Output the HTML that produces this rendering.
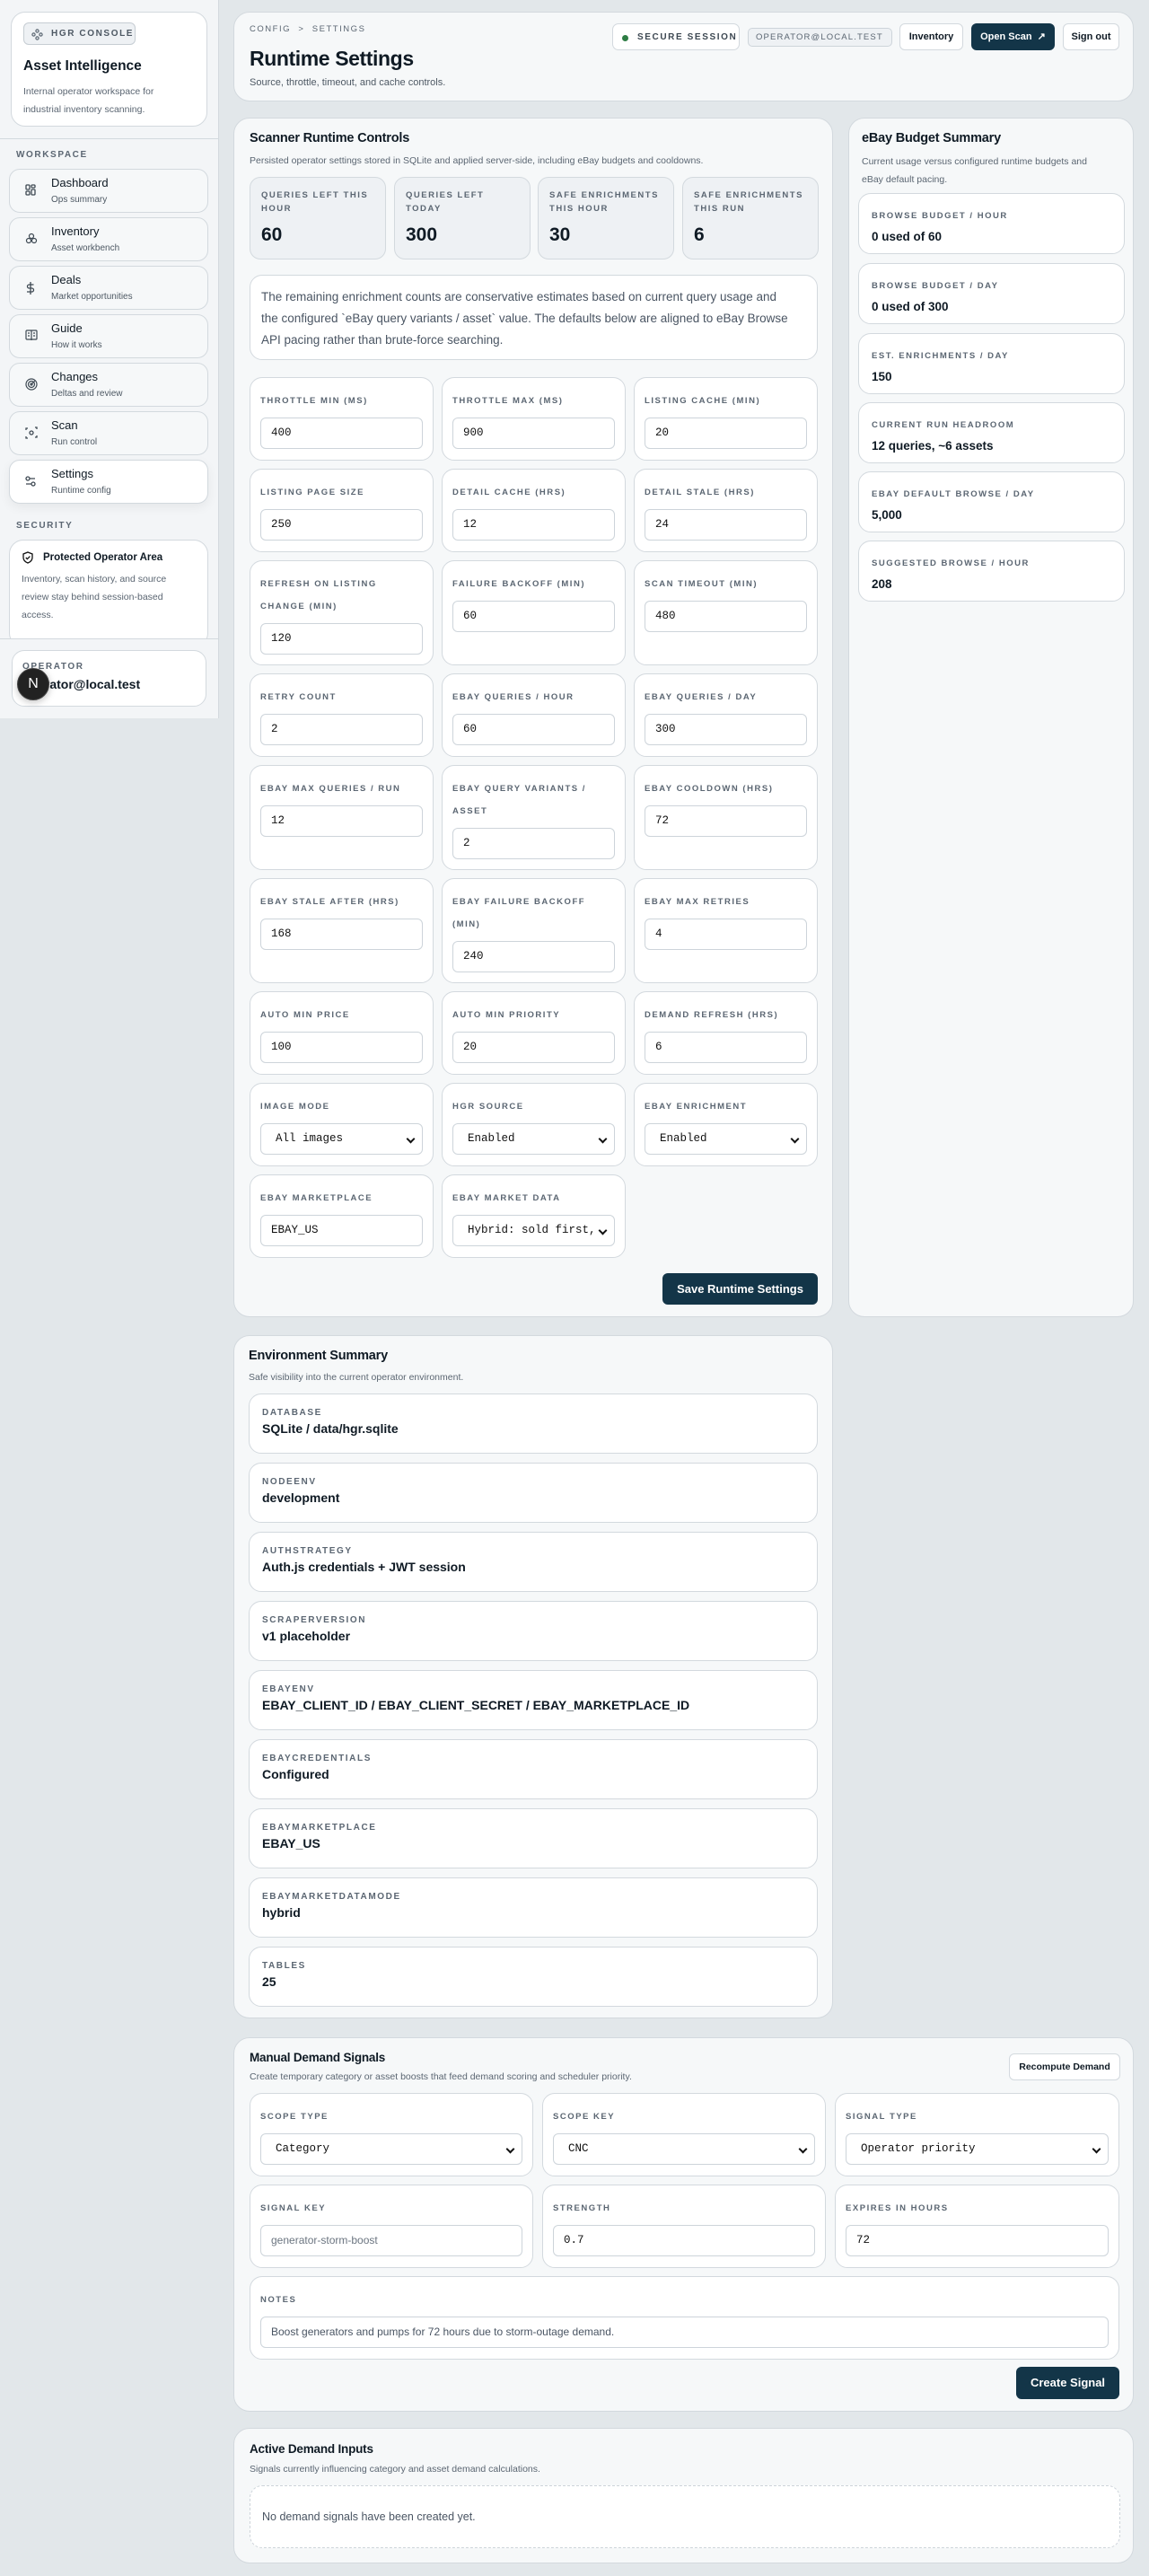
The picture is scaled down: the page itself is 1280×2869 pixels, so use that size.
<!DOCTYPE html>
<html><head><meta charset="utf-8"><style>
*{box-sizing:border-box;margin:0;padding:0}
body{width:1280px;height:2869px;background:#e2e7ea;font-family:"Liberation Sans",sans-serif;color:#0f1a24;position:relative;overflow:hidden}
.abs{position:absolute}
.side{left:0;top:0;width:244px;height:800px;background:#f3f5f7;border-right:1px solid #d3d9de}
.cap{font-size:10px;font-weight:bold;letter-spacing:.16em;color:#5b6672;text-transform:uppercase}
.card{background:#f6f8f9;border:1px solid #d3d9de;border-radius:18px}
.box{background:#fff;border:1px solid #d3d9de;border-radius:14px}
.nav{position:absolute;left:10px;width:222px;height:49px;border:1px solid #d3d9de;border-radius:12px;background:#f6f8f9}
.nav.act{background:#fff;box-shadow:0 4px 12px rgba(0,0,0,.06)}
.nav svg{position:absolute;left:17px;top:16px}
.nav .t{position:absolute;left:46px;top:7px;font-size:13px;color:#0f1a24}
.nav .s{position:absolute;left:46px;top:28px;font-size:10px;color:#4d5863}
.h2{font-size:14.5px;font-weight:bold;letter-spacing:-.2px}
.desc{font-size:10.5px;color:#5b6672}
.grid{display:grid;grid-template-columns:205px 205px 205px;column-gap:9px;row-gap:9px}
.f{background:#fff;border:1px solid #d3d9de;border-radius:14px;padding:13px 11px 0}
.f .cap{line-height:25px;font-size:9.5px}
.inp{margin-top:6px;height:35px;border:1px solid #cdd4da;border-radius:6px;background:#fff;font-family:"Liberation Mono",monospace;font-size:12.5px;padding:0 11px;line-height:33px;color:#111;position:relative;white-space:nowrap;overflow:hidden}
.sel::after{content:"";position:absolute;right:9px;top:13px;width:5px;height:5px;border-right:2px solid #111;border-bottom:2px solid #111;transform:rotate(45deg)}
.sel{padding-left:16px}
.btn{position:absolute;border-radius:6px;font-size:11px;font-weight:bold;text-align:center}
.dark{background:#133548;color:#fff}
.envi{position:absolute;left:16px;width:634px;height:67px}
.envi .cap{position:absolute;left:14px;top:15px}
.envi .v{position:absolute;left:14px;top:30px;font-size:14px;font-weight:bold}
.bud{position:absolute;left:10px;width:297px;height:68px}
.bud .cap{position:absolute;left:14px;top:19px;font-size:9.5px}
.bud .v{position:absolute;left:14px;top:40px;font-size:13.5px;font-weight:bold}
.stat{position:absolute;top:65px;height:92px;width:152px;background:#eef1f4;border:1px solid #d3d9de;border-radius:12px}
.stat .cap{position:absolute;left:12px;top:12px;line-height:15px;font-size:9.5px}
.stat .n{position:absolute;left:12px;top:52px;font-size:21px;font-weight:bold}
</style></head><body>

<div class="abs side">
  <div class="abs box" style="left:12px;top:13px;width:219px;height:128px;border-radius:16px">
    <div class="abs" style="left:13px;top:11px;width:125px;height:25px;border:1px solid #c6cdd3;border-radius:6px;background:#eef1f4">
      <svg class="abs" style="left:8px;top:6px" width="13" height="13" viewBox="0 0 13 13" fill="none" stroke="#5b6672" stroke-width="1.2"><circle cx="6.5" cy="2.5" r="1.6"/><circle cx="2.5" cy="6.5" r="1.6"/><circle cx="10.5" cy="6.5" r="1.6"/><circle cx="6.5" cy="10.5" r="1.6"/></svg>
      <div class="abs cap" style="left:30px;top:6px;color:#4d5863">HGR CONSOLE</div>
    </div>
    <div class="abs" style="left:13px;top:51px;font-size:15.5px;font-weight:bold">Asset Intelligence</div>
    <div class="abs" style="left:13px;top:78px;font-size:10.5px;color:#5b6672;line-height:20px;width:175px">Internal operator workspace for industrial inventory scanning.</div>
  </div>
  <div class="abs" style="left:0;top:154px;width:243px;height:1px;background:#d3d9de"></div>
  <div class="abs cap" style="left:18px;top:167px">WORKSPACE</div>
  <div class="nav" style="top:188px"><svg width="12" height="14" viewBox="0 0 12 14" fill="none" stroke="#3d4852" stroke-width="1.3"><rect x="1" y="1" width="4" height="5" rx="1"/><rect x="7" y="1" width="4" height="3" rx="1"/><rect x="1" y="8" width="4" height="4" rx="1"/><rect x="7" y="6" width="4" height="6" rx="1"/></svg><div class="t">Dashboard</div><div class="s">Ops summary</div></div>
  <div class="nav" style="top:242px"><svg width="14" height="14" viewBox="0 0 14 14" fill="none" stroke="#3d4852" stroke-width="1.2"><circle cx="7" cy="4" r="2.5"/><circle cx="4" cy="9" r="2.5"/><circle cx="10" cy="9" r="2.5"/></svg><div class="t">Inventory</div><div class="s">Asset workbench</div></div>
  <div class="nav" style="top:296px"><svg width="12" height="16" viewBox="0 0 12 16" fill="none" stroke="#3d4852" stroke-width="1.3"><path d="M6 1v14M9.5 4H4.5a2 2 0 0 0 0 4h3a2 2 0 0 1 0 4H2"/></svg><div class="t">Deals</div><div class="s">Market opportunities</div></div>
  <div class="nav" style="top:350px"><svg width="14" height="13" viewBox="0 0 14 13" fill="none" stroke="#3d4852" stroke-width="1.2"><rect x="1" y="1" width="12" height="10" rx="1"/><path d="M7 1v11M3 4h2M3 7h2M9 4h2M9 7h2"/></svg><div class="t">Guide</div><div class="s">How it works</div></div>
  <div class="nav" style="top:404px"><svg width="14" height="14" viewBox="0 0 14 14" fill="none" stroke="#3d4852" stroke-width="1.2"><circle cx="7" cy="7" r="6"/><circle cx="7" cy="7" r="3.5"/><circle cx="7" cy="7" r="1"/><path d="M7 7l4-4"/></svg><div class="t">Changes</div><div class="s">Deltas and review</div></div>
  <div class="nav" style="top:458px"><svg width="14" height="14" viewBox="0 0 14 14" fill="none" stroke="#3d4852" stroke-width="1.3"><path d="M1 4V2h2M11 1h2v2M13 10v2h-2M3 13H1v-2"/><circle cx="7" cy="7" r="2"/></svg><div class="t">Scan</div><div class="s">Run control</div></div>
  <div class="nav act" style="top:512px"><svg width="12" height="14" viewBox="0 0 12 14" fill="none" stroke="#3d4852" stroke-width="1.3"><circle cx="3" cy="4" r="2"/><path d="M5 4h6M1 10h6"/><circle cx="9" cy="10" r="2"/></svg><div class="t">Settings</div><div class="s">Runtime config</div></div>
  <div class="abs cap" style="left:18px;top:580px">SECURITY</div>
  <div class="abs box" style="left:10px;top:601px;width:222px;height:120px;border-radius:16px">
    <svg class="abs" style="left:14px;top:12px" width="12" height="14" viewBox="0 0 12 14" fill="none" stroke="#111" stroke-width="1.3"><path d="M6 1l5 2v4c0 3-2.5 5-5 6-2.5-1-5-3-5-6V3z"/><path d="M3.8 7l1.6 1.6L8.4 5.6"/></svg>
    <div class="abs" style="left:37px;top:13px;font-size:11.5px;font-weight:bold">Protected Operator Area</div>
    <div class="abs" style="left:13px;top:33px;width:178px;font-size:10.5px;line-height:20px;color:#5b6672">Inventory, scan history, and source review stay behind session-based access.</div>
  </div>
  <div class="abs" style="left:0;top:711px;width:243px;height:89px;background:#f3f5f7;border-top:1px solid #d3d9de"></div>
  <div class="abs box" style="left:13px;top:724px;width:217px;height:63px;border-radius:14px">
    <div class="abs cap" style="left:11px;top:12px">OPERATOR</div>
    <div class="abs" style="left:11px;top:29px;font-size:14px;font-weight:bold">operator@local.test</div>
  </div>
  <div class="abs" style="left:19px;top:744px;width:36px;height:36px;border-radius:50%;background:#222;border:1px solid #444;color:#fff;font-size:16px;text-align:center;line-height:34px;box-shadow:0 2px 8px rgba(0,0,0,.25)">N</div>
</div>

<!-- Header -->
<div class="abs card" style="left:260px;top:13px;width:1003px;height:100px">
  <div class="abs cap" style="left:17px;top:13px;font-weight:normal;font-size:9.5px">CONFIG &nbsp;&gt;&nbsp; SETTINGS</div>
  <div class="abs" style="left:17px;top:38px;font-size:23px;font-weight:bold;letter-spacing:-.4px">Runtime Settings</div>
  <div class="abs" style="left:17px;top:72px;font-size:11px;color:#4d5863">Source, throttle, timeout, and cache controls.</div>
  <div class="abs" style="left:421px;top:12px;width:142px;height:30px;background:#fff;border:1px solid #d3d9de;border-radius:7px">
    <div class="abs" style="left:10px;top:12px;width:7px;height:7px;border-radius:50%;background:#2e7d44"></div>
    <div class="abs cap" style="left:27px;top:9px;color:#3d4852">SECURE SESSION</div>
  </div>
  <div class="abs" style="left:572px;top:17px;width:161px;height:21px;background:#eef1f4;border:1px solid #cdd4da;border-radius:5px"><div class="abs cap" style="left:8px;top:4px;font-weight:normal;font-size:9.5px;letter-spacing:.12em">OPERATOR@LOCAL.TEST</div></div>
  <div class="btn" style="left:741px;top:12px;width:71px;height:30px;background:#fff;border:1px solid #d3d9de;line-height:28px">Inventory</div>
  <div class="btn dark" style="left:821px;top:12px;width:93px;height:30px;line-height:30px">Open Scan &nbsp;↗</div>
  <div class="btn" style="left:923px;top:12px;width:63px;height:30px;background:#fff;border:1px solid #d3d9de;line-height:28px">Sign out</div>
</div>

<!-- Scanner Runtime Controls -->
<div class="abs card" style="left:260px;top:131px;width:668px;height:1336px">
  <div class="abs h2" style="left:17px;top:14px">Scanner Runtime Controls</div>
  <div class="abs desc" style="left:17px;top:41px">Persisted operator settings stored in SQLite and applied server-side, including eBay budgets and cooldowns.</div>
  <div class="stat" style="left:17px"><div class="cap">QUERIES LEFT THIS<br>HOUR</div><div class="n">60</div></div>
  <div class="stat" style="left:178px"><div class="cap">QUERIES LEFT<br>TODAY</div><div class="n">300</div></div>
  <div class="stat" style="left:338px"><div class="cap">SAFE ENRICHMENTS<br>THIS HOUR</div><div class="n">30</div></div>
  <div class="stat" style="left:499px"><div class="cap">SAFE ENRICHMENTS<br>THIS RUN</div><div class="n">6</div></div>
  <div class="abs box" style="left:17px;top:174px;width:633px;height:95px;padding:12px 30px 12px 12px;font-size:13.5px;line-height:24px;color:#4a5563">The remaining enrichment counts are conservative estimates based on current query usage and the configured `eBay query variants / asset` value. The defaults below are aligned to eBay Browse API pacing rather than brute-force searching.</div>
  <div class="abs grid" style="left:17px;top:288px;grid-template-rows:93px 93px 117px 93px 117px 117px 93px 93px 93px">
    <div class="f"><div class="cap">THROTTLE MIN (MS)</div><div class="inp">400</div></div>
    <div class="f"><div class="cap">THROTTLE MAX (MS)</div><div class="inp">900</div></div>
    <div class="f"><div class="cap">LISTING CACHE (MIN)</div><div class="inp">20</div></div>
    <div class="f"><div class="cap">LISTING PAGE SIZE</div><div class="inp">250</div></div>
    <div class="f"><div class="cap">DETAIL CACHE (HRS)</div><div class="inp">12</div></div>
    <div class="f"><div class="cap">DETAIL STALE (HRS)</div><div class="inp">24</div></div>
    <div class="f"><div class="cap">REFRESH ON LISTING<br>CHANGE (MIN)</div><div class="inp">120</div></div>
    <div class="f"><div class="cap">FAILURE BACKOFF (MIN)</div><div class="inp">60</div></div>
    <div class="f"><div class="cap">SCAN TIMEOUT (MIN)</div><div class="inp">480</div></div>
    <div class="f"><div class="cap">RETRY COUNT</div><div class="inp">2</div></div>
    <div class="f"><div class="cap">EBAY QUERIES / HOUR</div><div class="inp">60</div></div>
    <div class="f"><div class="cap">EBAY QUERIES / DAY</div><div class="inp">300</div></div>
    <div class="f"><div class="cap">EBAY MAX QUERIES / RUN</div><div class="inp">12</div></div>
    <div class="f"><div class="cap">EBAY QUERY VARIANTS /<br>ASSET</div><div class="inp">2</div></div>
    <div class="f"><div class="cap">EBAY COOLDOWN (HRS)</div><div class="inp">72</div></div>
    <div class="f"><div class="cap">EBAY STALE AFTER (HRS)</div><div class="inp">168</div></div>
    <div class="f"><div class="cap">EBAY FAILURE BACKOFF<br>(MIN)</div><div class="inp">240</div></div>
    <div class="f"><div class="cap">EBAY MAX RETRIES</div><div class="inp">4</div></div>
    <div class="f"><div class="cap">AUTO MIN PRICE</div><div class="inp">100</div></div>
    <div class="f"><div class="cap">AUTO MIN PRIORITY</div><div class="inp">20</div></div>
    <div class="f"><div class="cap">DEMAND REFRESH (HRS)</div><div class="inp">6</div></div>
    <div class="f"><div class="cap">IMAGE MODE</div><div class="inp sel">All images</div></div>
    <div class="f"><div class="cap">HGR SOURCE</div><div class="inp sel">Enabled</div></div>
    <div class="f"><div class="cap">EBAY ENRICHMENT</div><div class="inp sel">Enabled</div></div>
    <div class="f"><div class="cap">EBAY MARKETPLACE</div><div class="inp">EBAY_US</div></div>
    <div class="f"><div class="cap">EBAY MARKET DATA</div><div class="inp sel">Hybrid: sold first,</div></div>
  </div>
  <div class="btn dark" style="left:477px;top:1286px;width:173px;height:35px;line-height:35px;font-size:13px">Save Runtime Settings</div>
</div>

<!-- eBay Budget Summary -->
<div class="abs card" style="left:945px;top:131px;width:318px;height:1336px">
  <div class="abs h2" style="left:14px;top:14px">eBay Budget Summary</div>
  <div class="abs desc" style="left:14px;top:38px;width:275px;line-height:20px">Current usage versus configured runtime budgets and eBay default pacing.</div>
  <div class="bud box" style="top:83px"><div class="cap">BROWSE BUDGET / HOUR</div><div class="v">0 used of 60</div></div>
  <div class="bud box" style="top:161px"><div class="cap">BROWSE BUDGET / DAY</div><div class="v">0 used of 300</div></div>
  <div class="bud box" style="top:239px"><div class="cap">EST. ENRICHMENTS / DAY</div><div class="v">150</div></div>
  <div class="bud box" style="top:316px"><div class="cap">CURRENT RUN HEADROOM</div><div class="v">12 queries, ~6 assets</div></div>
  <div class="bud box" style="top:393px"><div class="cap">EBAY DEFAULT BROWSE / DAY</div><div class="v">5,000</div></div>
  <div class="bud box" style="top:470px"><div class="cap">SUGGESTED BROWSE / HOUR</div><div class="v">208</div></div>
</div>

<!-- Environment Summary -->
<div class="abs card" style="left:260px;top:1487px;width:668px;height:761px">
  <div class="abs h2" style="left:16px;top:14px">Environment Summary</div>
  <div class="abs desc" style="left:16px;top:40px">Safe visibility into the current operator environment.</div>
  <div class="envi box" style="top:64px"><div class="cap">DATABASE</div><div class="v">SQLite / data/hgr.sqlite</div></div>
  <div class="envi box" style="top:141px"><div class="cap">NODEENV</div><div class="v">development</div></div>
  <div class="envi box" style="top:218px"><div class="cap">AUTHSTRATEGY</div><div class="v">Auth.js credentials + JWT session</div></div>
  <div class="envi box" style="top:295px"><div class="cap">SCRAPERVERSION</div><div class="v">v1 placeholder</div></div>
  <div class="envi box" style="top:372px"><div class="cap">EBAYENV</div><div class="v">EBAY_CLIENT_ID / EBAY_CLIENT_SECRET / EBAY_MARKETPLACE_ID</div></div>
  <div class="envi box" style="top:449px"><div class="cap">EBAYCREDENTIALS</div><div class="v">Configured</div></div>
  <div class="envi box" style="top:526px"><div class="cap">EBAYMARKETPLACE</div><div class="v">EBAY_US</div></div>
  <div class="envi box" style="top:603px"><div class="cap">EBAYMARKETDATAMODE</div><div class="v">hybrid</div></div>
  <div class="envi box" style="top:680px"><div class="cap">TABLES</div><div class="v">25</div></div>
</div>

<!-- Manual Demand Signals -->
<div class="abs card" style="left:260px;top:2269px;width:1003px;height:417px">
  <div class="abs h2" style="left:17px;top:14px;font-size:13.5px">Manual Demand Signals</div>
  <div class="abs desc" style="left:17px;top:37px">Create temporary category or asset boosts that feed demand scoring and scheduler priority.</div>
  <div class="btn" style="left:863px;top:17px;width:124px;height:30px;background:#fff;border:1px solid #d3d9de;line-height:28px;font-size:10.5px">Recompute Demand</div>
  <div class="abs grid" style="left:17px;top:61px;grid-template-columns:316px 316px 317px;column-gap:10px;grid-template-rows:93px 93px 93px">
    <div class="f"><div class="cap">SCOPE TYPE</div><div class="inp sel">Category</div></div>
    <div class="f"><div class="cap">SCOPE KEY</div><div class="inp sel">CNC</div></div>
    <div class="f"><div class="cap">SIGNAL TYPE</div><div class="inp sel">Operator priority</div></div>
    <div class="f"><div class="cap">SIGNAL KEY</div><div class="inp" style="font-family:'Liberation Sans',sans-serif;color:#6b7580;font-size:12px">generator-storm-boost</div></div>
    <div class="f"><div class="cap">STRENGTH</div><div class="inp">0.7</div></div>
    <div class="f"><div class="cap">EXPIRES IN HOURS</div><div class="inp">72</div></div>
    <div class="f" style="grid-column:1 / 4"><div class="cap">NOTES</div><div class="inp" style="font-family:'Liberation Sans',sans-serif;color:#4a5563;font-size:12px">Boost generators and pumps for 72 hours due to storm-outage demand.</div></div>
  </div>
  <div class="btn dark" style="left:871px;top:366px;width:115px;height:36px;line-height:36px;font-size:13px">Create Signal</div>
</div>

<!-- Active Demand Inputs -->
<div class="abs card" style="left:260px;top:2704px;width:1003px;height:151px">
  <div class="abs h2" style="left:17px;top:15px;font-size:13.5px">Active Demand Inputs</div>
  <div class="abs desc" style="left:17px;top:39px">Signals currently influencing category and asset demand calculations.</div>
  <div class="abs" style="left:17px;top:63px;width:970px;height:70px;background:#fff;border:1px dashed #cdd4da;border-radius:14px;padding:0 13px;line-height:68px;font-size:12.5px;color:#4a5563">No demand signals have been created yet.</div>
</div>

</body></html>
